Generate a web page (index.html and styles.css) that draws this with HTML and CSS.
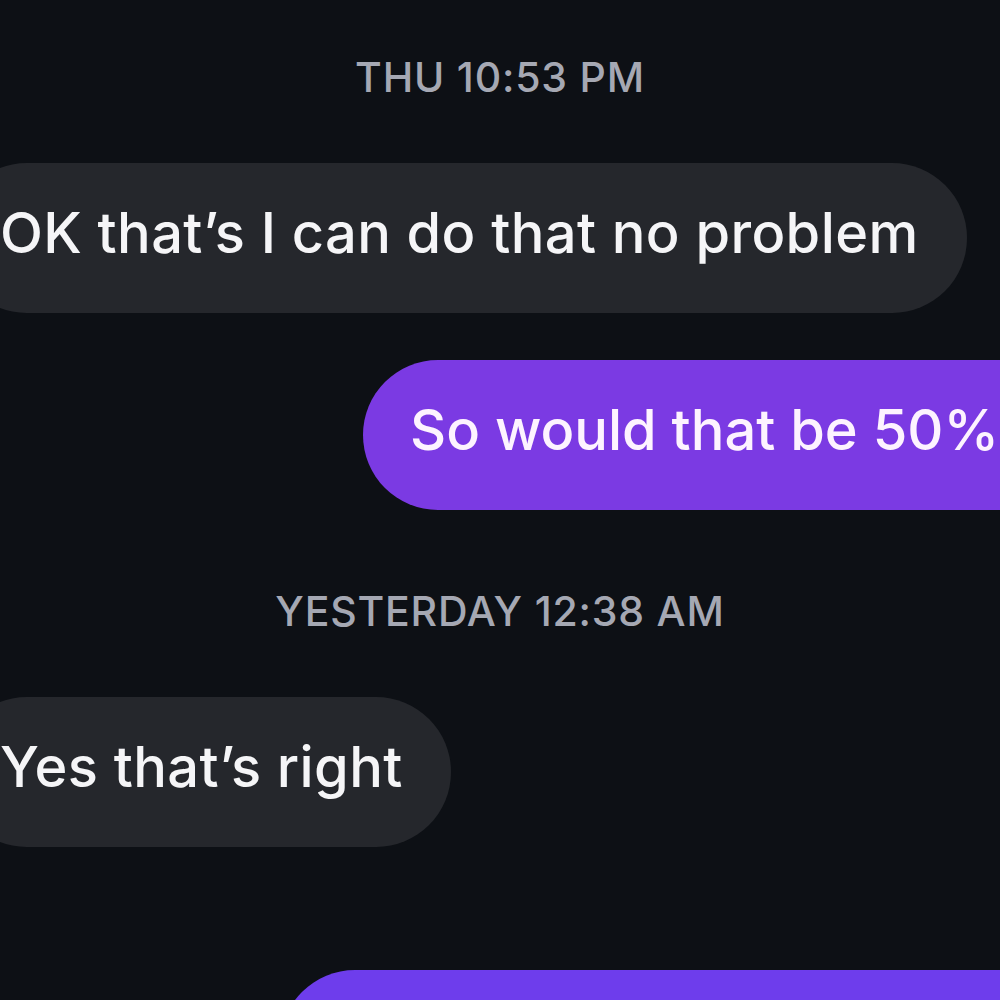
FILE: index.html
```html
<!DOCTYPE html>
<html lang="en">
<head>
<meta charset="utf-8">
<title>Chat</title>
<link rel="stylesheet" href="styles.css">
</head>
<body>
<main class="thread">
  <div class="stamp stamp-first">THU 10:53 PM</div>
  <div class="row row-in row-first">
    <div class="bubble bubble-in">OK that’s I can do that no problem</div>
  </div>
  <div class="row row-out row-second">
    <div class="bubble bubble-out">So would that be 50%</div>
  </div>
  <div class="stamp stamp-second">YESTERDAY 12:38 AM</div>
  <div class="row row-in row-third">
    <div class="bubble bubble-in">Yes that’s right</div>
  </div>
  <div class="row row-out row-last">
    <div class="bubble bubble-out bubble-blue">&nbsp;</div>
  </div>
</main>
</body>
</html>
```
FILE: styles.css
```css
html, body {
  margin: 0;
  padding: 0;
  background: #0d1015;
  overflow: hidden;
}

.thread {
  width: 1000px;
  height: 1000px;
  overflow: hidden;
  display: flex;
  flex-direction: column;
  padding-top: 52px;
  box-sizing: border-box;
  font-family: Inter, "Liberation Sans", sans-serif;
}

.stamp {
  text-align: center;
  font-size: 41px;
  line-height: 50px;
  height: 50px;
  font-weight: 500;
  letter-spacing: 0.8px;
  color: #a5a8b3;
  white-space: nowrap;
}

.stamp-second {
  margin-top: 76px;
}

.row {
  display: flex;
}

.row-in {
  justify-content: flex-start;
  margin-left: -48px;
}

.row-out {
  justify-content: flex-start;
}

.row-first { margin-top: 61px; }
.row-second { margin-top: 47px; padding-left: 363px; }
.row-third { margin-top: 61px; }
.row-last { margin-top: 123px; padding-left: 280px; }

.bubble {
  box-sizing: border-box;
  height: 150px;
  padding: 37px 48px 47px;
  border-radius: 75px;
  font-size: 56px;
  line-height: 66px;
  font-weight: 500;
  letter-spacing: 0.4px;
  white-space: nowrap;
  flex-shrink: 0;
}

.bubble-in {
  background: #25272c;
  color: #f5f5f7;
}

.bubble-out {
  background: #7b3ae3;
  color: #fdf3ff;
  width: 760px;
  letter-spacing: 0;
  padding-left: 47px;
}

.bubble-blue {
  background: #6e3dec;
  width: 820px;
}
```
